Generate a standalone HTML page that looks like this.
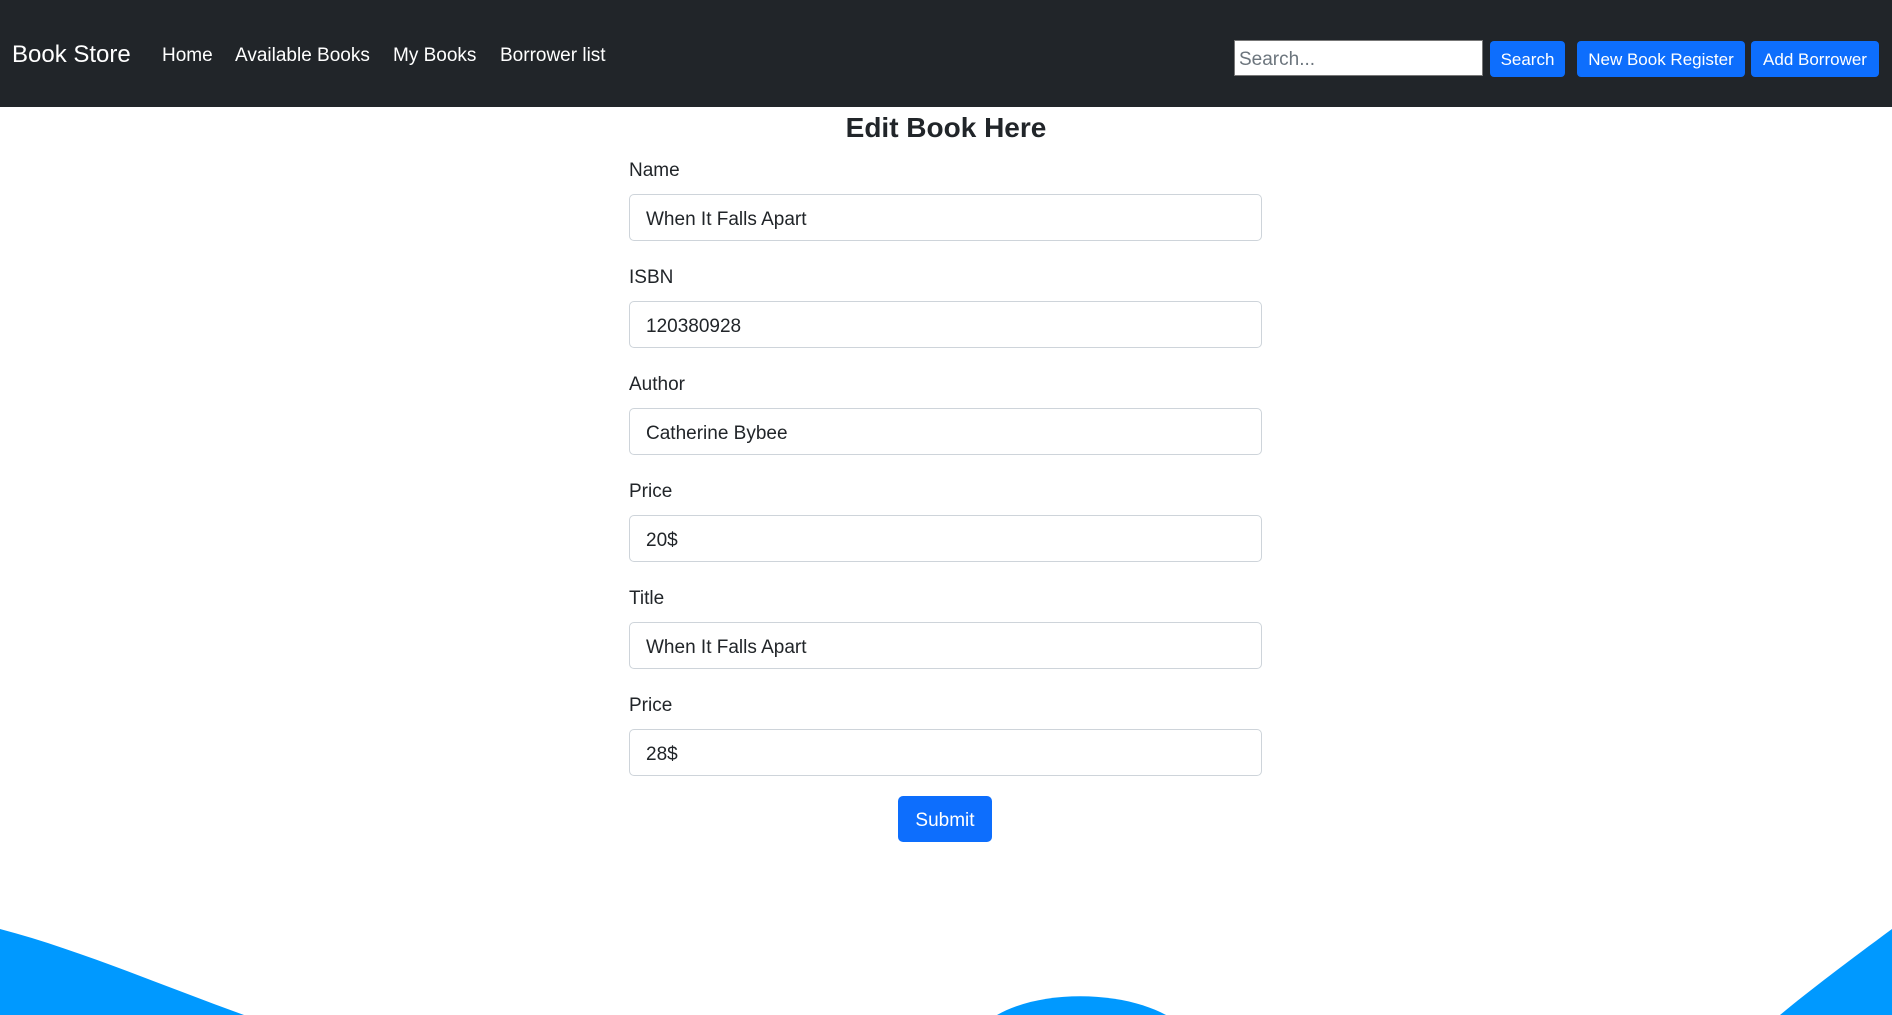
<!DOCTYPE html>
<html><head><style>
*{box-sizing:border-box;margin:0;padding:0}
body{width:1892px;height:1015px;overflow:hidden;background:#fff;font-family:"Liberation Sans",sans-serif;color:#212529;position:relative}
.nav{position:absolute;left:0;top:0;width:1892px;height:107px;background:#212529}
.brand{position:absolute;left:12px;top:41px;font-size:24px;color:#fff}
.link{position:absolute;top:45px;font-size:19px;color:#fff}
.sin{position:absolute;left:1234px;top:40px;width:249px;height:36px;background:#fff;border:1px solid #777;font-size:19px;color:#6c757d;padding:8px 4px 0}
.btn{position:absolute;background:#0d6efd;color:#fff;border-radius:4px;font-size:17px;text-align:center}
h2{position:absolute;left:0;width:1892px;top:112px;text-align:center;font-size:28px;font-weight:bold}
.lbl{position:absolute;left:629px;font-size:19px}
.inp{position:absolute;left:629px;width:633px;height:47px;border:1px solid #ced4da;border-radius:5px;font-size:19px;padding:14px 16px 0}
</style></head><body>
<div class="nav">
<div class="brand">Book Store</div>
<div class="link" style="left:162px">Home</div>
<div class="link" style="left:235px">Available Books</div>
<div class="link" style="left:393px">My Books</div>
<div class="link" style="left:500px">Borrower list</div>
<div class="sin">Search...</div>
<div class="btn" style="left:1490px;top:41px;width:75px;height:36px;line-height:38px">Search</div>
<div class="btn" style="left:1577px;top:41px;width:168px;height:36px;line-height:38px">New Book Register</div>
<div class="btn" style="left:1751px;top:41px;width:128px;height:36px;line-height:38px">Add Borrower</div>
</div>
<h2>Edit Book Here</h2>
<div class="lbl" style="top:160px">Name</div><div class="inp" style="top:194px">When It Falls Apart</div>
<div class="lbl" style="top:267px">ISBN</div><div class="inp" style="top:301px">120380928</div>
<div class="lbl" style="top:374px">Author</div><div class="inp" style="top:408px">Catherine Bybee</div>
<div class="lbl" style="top:481px">Price</div><div class="inp" style="top:515px">20$</div>
<div class="lbl" style="top:588px">Title</div><div class="inp" style="top:622px">When It Falls Apart</div>
<div class="lbl" style="top:695px">Price</div><div class="inp" style="top:729px">28$</div>
<div class="btn" style="left:898px;top:796px;width:94px;height:46px;line-height:49px;font-size:19px;border-radius:5px">Submit</div>
<svg style="position:absolute;left:0;top:0" width="1892" height="1015">
<path d="M0,929 C80,950 160,985 244,1015 L0,1015Z" fill="#0099ff"/>
<path d="M997,1015 C1040,990 1120,990 1166,1015Z" fill="#0099ff"/>
<path d="M1892,929 C1850,960 1810,990 1780,1015 L1892,1015Z" fill="#0099ff"/>
</svg>
</body></html>
